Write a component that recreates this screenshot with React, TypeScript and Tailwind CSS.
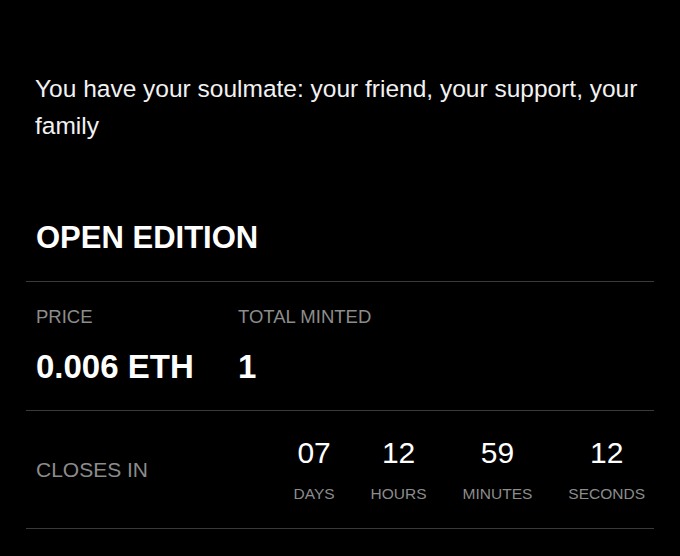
const countdown = [
  { value: '07', label: 'DAYS' },
  { value: '12', label: 'HOURS' },
  { value: '59', label: 'MINUTES' },
  { value: '12', label: 'SECONDS' },
]

export default function App() {
  return (
    <div className="min-h-[556px] bg-black px-[26px] font-['Liberation_Sans',Arial,sans-serif] text-[#f2f2f2]">
      <p className="px-[9px] pt-[70px] text-[24.5px] leading-[37px]">
        You have your soulmate: your friend, your support, your family
      </p>

      <h2 className="mt-[78px] px-[10px] text-[31px] font-bold leading-none text-white">
        OPEN EDITION
      </h2>

      <div className="mt-[28px] flex border-t border-[#3a3a3a] px-[10px] pt-[26px] pb-[27px]">
        <div className="w-[202px]">
          <div className="text-[18.5px] leading-none text-[#8c8c8c]">PRICE</div>
          <div className="mt-[23px] text-[33px] font-bold leading-none text-white">
            0.006 ETH
          </div>
        </div>
        <div>
          <div className="text-[18.5px] leading-none text-[#8c8c8c]">TOTAL MINTED</div>
          <div className="mt-[23px] text-[33px] font-bold leading-none text-white">1</div>
        </div>
      </div>

      <div className="flex items-center justify-between border-y border-[#3a3a3a] pt-[27px] pb-[27px] pl-[10px] pr-[9px]">
        <div className="text-[21px] leading-none text-[#8c8c8c]">CLOSES IN</div>
        <div className="flex gap-[36px]">
          {countdown.map((item) => (
            <div key={item.label} className="flex flex-col items-center">
              <div className="text-[30px] leading-none text-white">{item.value}</div>
              <div className="mt-[18px] text-[15.5px] leading-none text-[#8c8c8c]">
                {item.label}
              </div>
            </div>
          ))}
        </div>
      </div>
    </div>
  )
}
